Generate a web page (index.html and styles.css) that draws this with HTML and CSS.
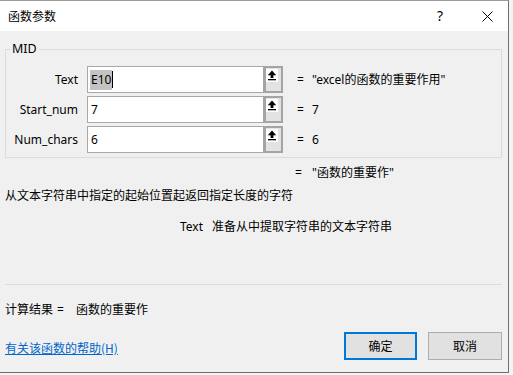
FILE: index.html
```html
<!DOCTYPE html>
<html lang="zh-CN">
<head>
<meta charset="utf-8">
<title>函数参数</title>
<link rel="stylesheet" href="styles.css">
</head>
<body>
<div class="dialog">
  <div class="titlebar">
    <span class="title">函数参数</span>
    <span class="help">?</span>
    <span class="close"><svg width="11" height="11" viewBox="0 0 11 11"><path d="M0.5 0.5L10.5 10.5M10.5 0.5L0.5 10.5" stroke="#000" stroke-width="1" fill="none"/></svg></span>
  </div>
  <div class="content">
    <fieldset class="group">
      <legend class="legend">MID</legend>
      <div class="args">
        <span class="label">Text</span>
        <div class="field">
          <div class="input"><span class="sel">E10</span><span class="caret"></span></div>
          <div class="pick"><span class="pick-face"><svg width="12" height="13" viewBox="0 0 12 13"><path d="M6 1.5L1.8 6.3H4.6V9H7.4V6.3H10.2Z" fill="#000"/><rect x="2" y="10" width="8" height="1.3" fill="#000"/></svg></span></div>
        </div>
        <span class="eq">=</span>
        <span class="val">"excel的函数的重要作用"</span>

        <span class="label">Start_num</span>
        <div class="field">
          <div class="input">7</div>
          <div class="pick"><span class="pick-face"><svg width="12" height="13" viewBox="0 0 12 13"><path d="M6 1.5L1.8 6.3H4.6V9H7.4V6.3H10.2Z" fill="#000"/><rect x="2" y="10" width="8" height="1.3" fill="#000"/></svg></span></div>
        </div>
        <span class="eq">=</span>
        <span class="val">7</span>

        <span class="label">Num_chars</span>
        <div class="field">
          <div class="input">6</div>
          <div class="pick"><span class="pick-face"><svg width="12" height="13" viewBox="0 0 12 13"><path d="M6 1.5L1.8 6.3H4.6V9H7.4V6.3H10.2Z" fill="#000"/><rect x="2" y="10" width="8" height="1.3" fill="#000"/></svg></span></div>
        </div>
        <span class="eq">=</span>
        <span class="val">6</span>
      </div>
    </fieldset>

    <div class="result-line"><span class="eq2">=</span><span>"函数的重要作"</span></div>
    <p class="desc">从文本字符串中指定的起始位置起返回指定长度的字符</p>
    <div class="argdesc"><span class="argname">Text</span><span>准备从中提取字符串的文本字符串</span></div>
    <div class="sep"></div>
    <div class="calc"><span>计算结果</span><span class="calc-eq">=</span><span>函数的重要作</span></div>
    <div class="footer">
      <a class="helplink" href="#">有关该函数的帮助(H)</a>
      <div class="buttons">
        <button class="btn btn-ok">确定</button>
        <button class="btn">取消</button>
      </div>
    </div>
  </div>
</div>
</body>
</html>
```

FILE: styles.css
```css
* { box-sizing: border-box; }

html, body {
  margin: 0;
  padding: 0;
}

body {
  width: 513px;
  height: 375px;
  background: #f4f4f4;
  font-family: "Noto Sans", "Noto Sans CJK SC", sans-serif;
  font-size: 12px;
  color: #000;
  overflow: hidden;
}

.dialog {
  width: 509px;
  height: 373px;
  background: #f0f0f0;
  border-top: 1px solid #9c9c9c;
  border-right: 1px solid #6f6f6f;
  border-bottom: 1px solid #6f6f6f;
  display: flex;
  flex-direction: column;
}

.titlebar {
  height: 30px;
  background: #fff;
  display: flex;
  align-items: center;
  padding-left: 8px;
  line-height: 16px;
}

.title {
  flex: 1;
  font-family: "Noto Sans CJK SC", sans-serif;
}

.help {
  font-size: 14px;
  width: 12px;
  margin-right: 33px;
}

.close {
  width: 24px;
  display: flex;
  margin-right: 2px;
  padding-top: 1px;
}

.content {
  padding: 0 6px 0 5px;
  display: flex;
  flex-direction: column;
}

.group {
  margin: 10px 0 0 0;
  padding: 0;
  width: 497px;
  border: 1px solid #dcdcdc;
  min-width: 0;
}

.legend {
  margin-left: 4px;
  padding: 0 2px;
  line-height: 16px;
  font-size: 12.5px;
}

.args {
  display: grid;
  grid-template-columns: 81px 196px 21px 1fr;
  grid-auto-rows: 27px;
  row-gap: 3px;
  padding: 9px 0 4px 0;
  align-items: center;
}

.label {
  text-align: right;
  padding-right: 9px;
  line-height: 16px;
}

.field {
  display: flex;
  height: 27px;
}

.input {
  width: 176px;
  height: 27px;
  background: #fff;
  border: 1px solid #a8a8a8;
  border-right: none;
  padding: 0 3px;
  display: flex;
  align-items: center;
  line-height: 16px;
}

.sel {
  background: #c3c3c3;
  padding: 2px 1px;
  margin-left: -1px;
}

.caret {
  width: 1px;
  height: 17px;
  background: #000;
}

.pick {
  width: 20px;
  height: 27px;
  border: 2px solid #a4a4a4;
  border-left-width: 3px;
  background: #e3e3e3;
  padding: 1px 0 0 0;
}

.pick-face {
  display: block;
  width: 12px;
  height: 13px;
  background: #fff;
}

.pick-face svg { display: block; }

.eq {
  padding-left: 14px;
  line-height: 16px;
}

.val {
  padding-left: 8px;
  line-height: 16px;
}

.result-line {
  margin-top: 7px;
  padding-left: 290px;
  line-height: 16px;
  display: flex;
}

.eq2 {
  width: 17px;
}

.desc {
  margin: 6px 0 0 0;
  line-height: 16px;
  font-family: "Noto Sans CJK SC", sans-serif;
}

.argdesc {
  margin-top: 16px;
  padding-left: 175px;
  line-height: 16px;
  display: flex;
}

.argname {
  width: 32px;
}

.sep {
  margin-top: 49px;
  width: 497px;
  height: 1px;
  background: #dcdcdc;
}

.calc {
  margin-top: 17px;
  line-height: 16px;
  display: flex;
}

.calc-eq {
  padding-left: 4px;
  width: 23px;
}

.footer {
  margin-top: 14px;
  display: flex;
  align-items: center;
  justify-content: space-between;
}

.helplink {
  color: #0066cc;
  text-decoration: underline;
  line-height: 16px;
  padding-top: 4px;
  font-family: "Noto Sans CJK SC", sans-serif;
}

.buttons {
  display: flex;
  gap: 11px;
}

.btn {
  width: 74px;
  height: 28px;
  background: #e1e1e1;
  border: 1px solid #adadad;
  font-family: "Noto Sans CJK SC", sans-serif;
  font-size: 12px;
  color: #000;
  padding: 0;
  line-height: 16px;
}

.btn-ok {
  width: 73px;
  border: 2px solid #0078d7;
}
```
